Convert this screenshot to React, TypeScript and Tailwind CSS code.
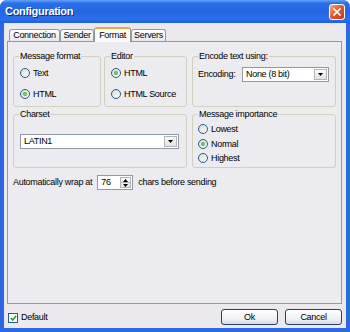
import React from "react";

function Radio({ checked }: { checked?: boolean }) {
  return (
    <span className="w-[10px] h-[10px] shrink-0 rounded-full border border-[#2a5a8c] bg-[linear-gradient(135deg,#d8d8d2,#ffffff)] flex items-center justify-center">
      {checked && (
        <span className="w-[4px] h-[4px] rounded-full bg-[radial-gradient(circle,#7fe07f,#1d9a1d)]" />
      )}
    </span>
  );
}

function Option({ label, checked }: { label: string; checked?: boolean }) {
  return (
    <div className="flex items-center gap-[3px] h-[12px]">
      <Radio checked={checked} />
      <span className="leading-[12px]">{label}</span>
    </div>
  );
}

function Group({
  title,
  className,
  children,
}: {
  title: string;
  className: string;
  children: React.ReactNode;
}) {
  return (
    <fieldset className={"p-0 m-0 border border-[#d0d0bf] rounded-[3px] " + className}>
      <legend className="ml-[5px] px-[1px] leading-[10px]">{title}</legend>
      {children}
    </fieldset>
  );
}

function ArrowDown() {
  return (
    <svg width="5" height="3" viewBox="0 0 5 3">
      <path d="M0 0h5L2.5 3z" fill="#000" />
    </svg>
  );
}

function Combo({ value, className }: { value: string; className: string }) {
  return (
    <div className={"flex h-[15px] bg-white border border-[#8e9aa8] " + className}>
      <span className="flex-1 pl-[3px] leading-[13px]">{value}</span>
      <span className="w-[13px] m-[1px] flex items-center justify-center bg-[linear-gradient(#fbfbfb,#e2e2e4)] border border-[#b4b4b8]">
        <ArrowDown />
      </span>
    </div>
  );
}

function Tab({ label, width, active }: { label: string; width: string; active?: boolean }) {
  if (active) {
    return (
      <div
        className={
          width +
          " relative z-10 -mb-px h-[15px] flex items-center justify-center border-x border-[#919b9c] border-t-2 border-t-[#f2a83a] rounded-t-[3px] bg-[#fbfbfc]"
        }
      >
        {label}
      </div>
    );
  }
  return (
    <div
      className={
        width +
        " h-[12px] flex items-center justify-center border-x border-t border-[#919b9c] rounded-t-[3px] bg-[linear-gradient(#ffffff,#e8e7ec)]"
      }
    >
      {label}
    </div>
  );
}

function Button({ label }: { label: string }) {
  return (
    <button className="w-[57px] h-[16px] rounded-[3px] border border-[#24416e] bg-[linear-gradient(#ffffff,#f1f1f4_60%,#d9d9e2)] leading-[14px] text-center">
      {label}
    </button>
  );
}

export default function App() {
  return (
    <div className="w-[350px] h-[332px] flex flex-col rounded-t-[7px] overflow-hidden bg-[#2c68e0] text-[9px] tracking-[-0.3px] text-black font-['Liberation_Sans',Arial,sans-serif]">
      {/* Title bar */}
      <div className="h-[23px] shrink-0 flex items-center pl-[5px] pr-[5px] bg-[linear-gradient(#63a3fa,#2b6fe8_14%,#2466e2_50%,#2c70ea_85%,#1f5fdc)]">
        <span className="flex-1 text-white font-bold text-[11px] tracking-[-0.3px] [text-shadow:1px_1px_0_#0b2a86]">
          Configuration
        </span>
        <span className="w-[16px] h-[16px] rounded-[3px] border border-white bg-[linear-gradient(135deg,#f5a88a,#e0562c_50%,#c43d17)] flex items-center justify-center">
          <svg width="8" height="8" viewBox="0 0 8 8">
            <path d="M1 1l6 6M7 1L1 7" stroke="white" strokeWidth="1.7" strokeLinecap="square" />
          </svg>
        </span>
      </div>

      {/* Client area */}
      <div className="flex-1 mx-[4px] mb-[4px] bg-[#ebe9ed] flex flex-col">
        <div className="pl-[3px] pr-[4px] pt-[4px]">
          {/* Tabs */}
          <div className="flex items-end h-[14px] pl-[2px]">
            <Tab label="Connection" width="w-[51px]" />
            <Tab label="Sender" width="w-[34px]" />
            <Tab label="Format" width="w-[37px]" active />
            <Tab label="Servers" width="w-[35px]" />
          </div>

          {/* Tab page */}
          <div className="h-[263px] border border-[#919b9c] bg-[#ecebef] pt-[9px] pl-[5px]">
            <div className="grid grid-cols-[174px_144px] gap-x-[5px]">
              <div className="flex gap-[3px]">
                <Group title="Message format" className="w-[88px] h-[56px]">
                  <div className="pt-[6px] pl-[6px] flex flex-col gap-[9px]">
                    <Option label="Text" />
                    <Option label="HTML" checked />
                  </div>
                </Group>
                <Group title="Editor" className="w-[83px] h-[56px]">
                  <div className="pt-[6px] pl-[6px] flex flex-col gap-[9px]">
                    <Option label="HTML" checked />
                    <Option label="HTML Source" />
                  </div>
                </Group>
              </div>

              <Group title="Encode text using:" className="h-[56px]">
                <div className="pt-[6px] pl-[5px] pr-[6px] flex items-center">
                  <span>Encoding:</span>
                  <Combo value="None (8 bit)" className="w-[87px] ml-auto" />
                </div>
              </Group>

              <Group title="Charset" className="mt-[2px] h-[59px]">
                <div className="pt-[15px] pl-[6px] pr-[7px]">
                  <Combo value="LATIN1" className="w-full" />
                </div>
              </Group>

              <Group title="Message importance" className="mt-[2px] h-[59px]">
                <div className="pt-[4px] pl-[5px] flex flex-col gap-[2.5px]">
                  <Option label="Lowest" />
                  <Option label="Normal" checked />
                  <Option label="Highest" />
                </div>
              </Group>
            </div>

            {/* Wrap row */}
            <div className="mt-[7px] flex items-center gap-[5px]">
              <span>Automatically wrap at</span>
              <div className="w-[36px] h-[15px] flex bg-white border border-[#8e9aa8]">
                <span className="flex-1 pl-[3px] leading-[13px]">76</span>
                <span className="w-[11px] m-[1px] flex flex-col border border-[#b4b4b8] bg-[linear-gradient(#fbfbfb,#e2e2e4)]">
                  <span className="flex-1 flex items-center justify-center border-b border-[#b4b4b8]">
                    <svg width="5" height="3" viewBox="0 0 5 3">
                      <path d="M0 3h5L2.5 0z" fill="#000" />
                    </svg>
                  </span>
                  <span className="flex-1 flex items-center justify-center">
                    <ArrowDown />
                  </span>
                </span>
              </div>
              <span>chars before sending</span>
            </div>
          </div>
        </div>

        {/* Bottom row */}
        <div className="flex-1 flex items-center pl-[4px] pr-[4px] pt-[1px]">
          <div className="flex items-center gap-[3px] mt-[3px]">
            <span className="w-[10px] h-[10px] border border-[#2a5a8c] bg-white flex items-center justify-center">
              <svg width="7" height="6" viewBox="0 0 7 6">
                <path d="M0.8 3l2 2L6.2 0.8" stroke="#21a121" strokeWidth="1.6" fill="none" />
              </svg>
            </span>
            <span>Default</span>
          </div>
          <div className="ml-auto flex gap-[7px]">
            <Button label="Ok" />
            <Button label="Cancel" />
          </div>
        </div>
      </div>
    </div>
  );
}
